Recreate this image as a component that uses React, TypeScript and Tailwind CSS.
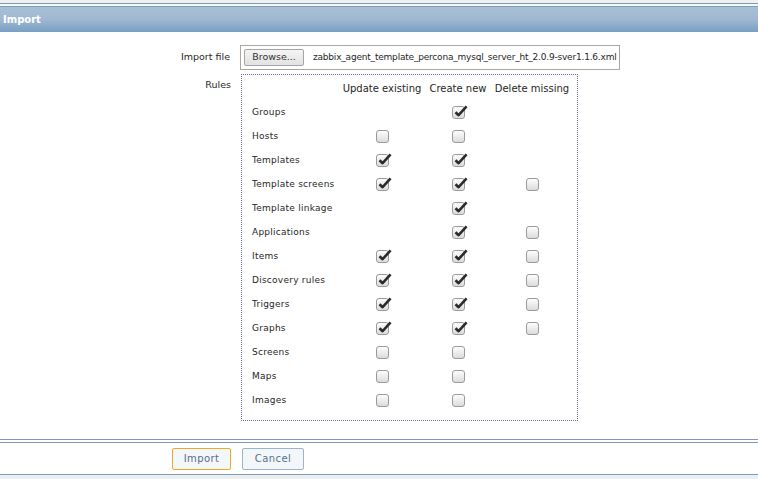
import React from 'react';

type Cell = boolean | null;

const rules: [string, Cell, Cell, Cell][] = [
  ['Groups', null, true, null],
  ['Hosts', false, false, null],
  ['Templates', true, true, null],
  ['Template screens', true, true, false],
  ['Template linkage', null, true, null],
  ['Applications', null, true, false],
  ['Items', true, true, false],
  ['Discovery rules', true, true, false],
  ['Triggers', true, true, false],
  ['Graphs', true, true, false],
  ['Screens', false, false, null],
  ['Maps', false, false, null],
  ['Images', false, false, null],
];

function Box({ checked }: { checked: boolean }) {
  return (
    <span className="relative inline-block h-[13px] w-[13px] rounded-[3px] border border-[#9a9a9a] bg-gradient-to-b from-[#fdfdfd] to-[#dcdcdc]">
      {checked && (
        <svg className="absolute left-[1px] top-[-3px]" width="14" height="14" viewBox="0 0 14 14">
          <path d="M1.5 8.2 L4.6 11.2 L12.6 2.4" fill="none" stroke="#2b2b2b" strokeWidth="2.6" strokeLinejoin="round" />
        </svg>
      )}
    </span>
  );
}

export default function App() {
  return (
    <div className="h-[479px] w-[758px] overflow-hidden bg-white text-[10px] text-[#1f1f1f]" style={{ fontFamily: '"DejaVu Sans", sans-serif' }}>
      <div className="h-[3px] bg-[#eef0f2]" />
      <div className="h-px bg-[#7f9ab3]" />
      <div className="h-[2px] bg-[#f6f8fa]" />
      <div className="flex h-[26px] items-center border-t border-[#7b9bba] bg-gradient-to-b from-[#a8bfd6] via-[#9fb8d1] to-[#789fc4] pl-[3px] text-[10px] font-bold text-white">
        Import
      </div>

      <div className="flex h-[407px] flex-col pt-[13px]">
        <div className="flex items-center">
          <div className="w-[231px] pr-px text-right text-[9.5px]">Import file</div>
          <div className="ml-[9px] flex h-[25px] w-[380px] items-center border border-[#a8a89c] bg-white pl-[3px]">
            <button className="h-[17px] w-[60px] shrink-0 rounded-[2px] border border-[#a5a5a5] bg-gradient-to-b from-[#f5f5f5] to-[#e2e2e2] text-[9.5px] text-[#333]">
              Browse...
            </button>
            <span className="ml-[9px] whitespace-nowrap text-[9px] tracking-[-0.2px]">zabbix_agent_template_percona_mysql_server_ht_2.0.9-sver1.1.6.xml</span>
          </div>
        </div>

        <div className="mt-[4px] flex items-start">
          <div className="w-[231px] pt-[4px] text-right text-[9.5px]">Rules</div>
          <div className="ml-[10px] w-[337px] border border-dotted border-[#6a6aa0] pb-[8px] pl-[10px] pt-[1px]">
            <div className="grid grid-cols-[87px_86px_66px_82px]">
              <div className="h-[24px]" />
              <div className="flex h-[24px] items-center justify-center whitespace-nowrap">Update existing</div>
              <div className="flex h-[24px] items-center justify-center whitespace-nowrap">Create new</div>
              <div className="flex h-[24px] items-center justify-center whitespace-nowrap">Delete missing</div>
              {rules.map(([name, u, c, d]) => (
                <React.Fragment key={name}>
                  <div className="flex h-[24px] items-center whitespace-nowrap pt-[2px] text-[9px] tracking-[0.25px]">{name}</div>
                  {[u, c, d].map((v, i) => (
                    <div key={i} className="flex h-[24px] items-center justify-center">
                      {v !== null && <Box checked={v} />}
                    </div>
                  ))}
                </React.Fragment>
              ))}
            </div>
          </div>
        </div>
      </div>

      <div className="h-px bg-[#7f9ab3]" />
      <div className="h-[2px] bg-white" />
      <div className="h-px bg-[#7f9ab3]" />
      <div className="flex h-[31px] items-center pl-[172px]">
        <button className="h-[22px] w-[59px] rounded-[2px] border border-[#f5a623] bg-[#f4f7fa] text-[10px] tracking-[0.4px] text-[#56718f]">
          Import
        </button>
        <button className="ml-[11px] h-[22px] w-[62px] rounded-[2px] border border-[#9db4cc] bg-[#f4f7fa] text-[10px] tracking-[0.4px] text-[#56718f]">
          Cancel
        </button>
      </div>
      <div className="h-px bg-[#7f9ab3]" />
      <div className="h-[5px] bg-[#eceff2]" />
    </div>
  );
}
